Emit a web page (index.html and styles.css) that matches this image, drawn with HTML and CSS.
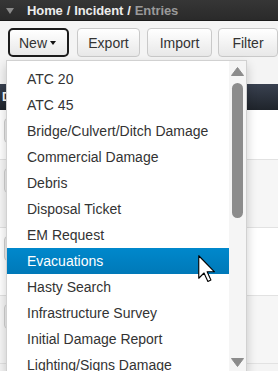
FILE: index.html
```html
<!DOCTYPE html>
<html>
<head>
<meta charset="utf-8">
<link rel="stylesheet" href="styles.css">
</head>
<body>
<div class="topbar">
  <span class="bar-caret"></span>
  <span class="crumbs"><span class="crumb">Home</span><span class="sep">/</span><span class="crumb">Incident</span><span class="sep">/</span><span class="crumb current">Entries</span></span>
</div>
<div class="toolbar">
  <div class="btn-group">
    <button class="btn btn-new">New<span class="caret"></span></button>
    <div class="menu">
      <ul class="menu-list">
        <li class="item">ATC 20</li>
        <li class="item">ATC 45</li>
        <li class="item">Bridge/Culvert/Ditch Damage</li>
        <li class="item">Commercial Damage</li>
        <li class="item">Debris</li>
        <li class="item">Disposal Ticket</li>
        <li class="item">EM Request</li>
        <li class="item active">Evacuations</li>
        <li class="item">Hasty Search</li>
        <li class="item">Infrastructure Survey</li>
        <li class="item">Initial Damage Report</li>
        <li class="item">Lighting/Signs Damage</li>
      </ul>
      <div class="scrollbar">
        <svg class="arrow" width="13" height="9" viewBox="0 0 13 9"><polygon points="6.5,0.5 12.5,8.5 0.5,8.5" fill="#8c8c8c" stroke="#8c8c8c" stroke-linejoin="round"/></svg>
        <div class="thumb"></div>
        <div class="spacer"></div>
        <svg class="arrow" width="13" height="9" viewBox="0 0 13 9"><polygon points="0.5,0.5 12.5,0.5 6.5,8.5" fill="#8c8c8c" stroke="#8c8c8c" stroke-linejoin="round"/></svg>
      </div>
    </div>
    <svg class="cursor" width="18" height="27" viewBox="0 0 12 18"><path d="M0.5,0.5 L0.5,15.5 L4,12 L6.6,17.6 L8.6,16.7 L6.1,11.2 L11,11.2 Z" fill="#fff" stroke="#000" stroke-width="0.75" stroke-linejoin="round"/></svg>
  </div>
  <button class="btn btn-export">Export</button>
  <button class="btn btn-import">Import</button>
  <button class="btn btn-filter">Filter</button>
</div>
<div class="grid">
  <div class="grid-head">Date</div>
  <div class="grid-row first"><span class="row-btn"></span></div>
  <div class="grid-row alt"><span class="row-btn"></span></div>
  <div class="grid-row"><span class="row-btn"></span></div>
  <div class="grid-row alt"><span class="row-btn"></span></div>
</div>
</body>
</html>
```

FILE: styles.css
```css
html, body {
  margin: 0;
  padding: 0;
}
body {
  width: 278px;
  height: 371px;
  overflow: hidden;
  background: #f4f4f4;
  font-family: "Liberation Sans", Arial, sans-serif;
  color: #333;
}
.topbar {
  height: 21px;
  background: linear-gradient(#363636, #2a2a2a);
  display: flex;
  align-items: center;
  padding-left: 6px;
  box-sizing: border-box;
  border-bottom: 1px solid #1a1a1a;
}
.bar-caret {
  width: 0;
  height: 0;
  border-left: 4.5px solid transparent;
  border-right: 4.5px solid transparent;
  border-top: 6px solid #8a8a8a;
  margin-top: 2px;
}
.crumbs {
  margin-left: 13px;
  font-weight: bold;
  font-size: 13px;
  color: #ececec;
  white-space: nowrap;
  letter-spacing: -0.1px;
}
.sep {
  margin: 0 4px;
}
.crumb.current {
  color: #9a9a9a;
}
.toolbar {
  display: flex;
  align-items: flex-start;
  padding: 7px 0 0 8px;
  box-sizing: border-box;
  height: 63px;
}
.btn-group {
  position: relative;
}
.btn {
  height: 29px;
  box-sizing: border-box;
  border: 1px solid #c9c9c9;
  border-radius: 4px;
  background: linear-gradient(#ffffff, #e8e8e8);
  font-family: "Liberation Sans", Arial, sans-serif;
  font-size: 14px;
  color: #333;
  padding: 0;
  display: flex;
  align-items: center;
  justify-content: center;
}
.btn-new {
  width: 61px;
  border: 2px solid #1c1c1c;
  border-radius: 5px;
  justify-content: flex-start;
  padding-left: 9px;
}
.caret {
  display: inline-block;
  width: 0;
  height: 0;
  border-left: 3.5px solid transparent;
  border-right: 3.5px solid transparent;
  border-top: 4px solid #111;
  margin-left: 3px;
}
.btn-export {
  width: 63px;
  margin-left: 8px;
}
.btn-import {
  width: 65px;
  margin-left: 7px;
}
.btn-filter {
  width: 60px;
  margin-left: 6px;
}
.menu {
  position: absolute;
  left: -2px;
  top: 32px;
  width: 241px;
  height: 313px;
  box-sizing: border-box;
  border: 1px solid rgba(0, 0, 0, 0.18);
  background: #fff;
  box-shadow: 0 5px 10px rgba(0, 0, 0, 0.2);
  display: flex;
  z-index: 5;
}
.menu-list {
  list-style: none;
  margin: 0;
  padding: 5px 0 0 0;
  flex: 1;
  overflow: hidden;
}
.item {
  height: 26px;
  line-height: 26px;
  padding-left: 20px;
  font-size: 14px;
  color: #333;
  white-space: nowrap;
}
.item.active {
  background: linear-gradient(#0088cc, #0079b8);
  color: #fff;
}
.scrollbar {
  width: 17px;
  background: #f5f5f5;
  display: flex;
  flex-direction: column;
  align-items: center;
  padding: 6px 0 5px 0;
  box-sizing: border-box;
}
.arrow {
  display: block;
  flex: none;
}
.thumb {
  width: 11px;
  height: 135px;
  margin-top: 7px;
  border-radius: 6px;
  background: #8c8c8c;
  flex: none;
}
.spacer {
  flex: 1;
}
.cursor {
  position: absolute;
  left: 190px;
  top: 227px;
  z-index: 6;
}
.grid {
  background: #fff;
}
.grid-head {
  height: 26px;
  background: linear-gradient(#394150, #1f242b);
  color: #fff;
  font-weight: bold;
  font-size: 12px;
  line-height: 26px;
  padding-left: 2px;
}
.grid-row {
  height: 68px;
  border-bottom: 1px solid #e2e2e2;
  box-sizing: border-box;
  padding: 8px 0 0 4px;
  background: #fff;
}
.grid-row.first {
  height: 50px;
}
.grid-row.alt {
  background: #f6f6f6;
}
.row-btn {
  display: block;
  width: 22px;
  height: 25px;
  box-sizing: border-box;
  border: 1px solid #d0d0d0;
  border-radius: 4px;
  background: #eeeeee;
}
```
